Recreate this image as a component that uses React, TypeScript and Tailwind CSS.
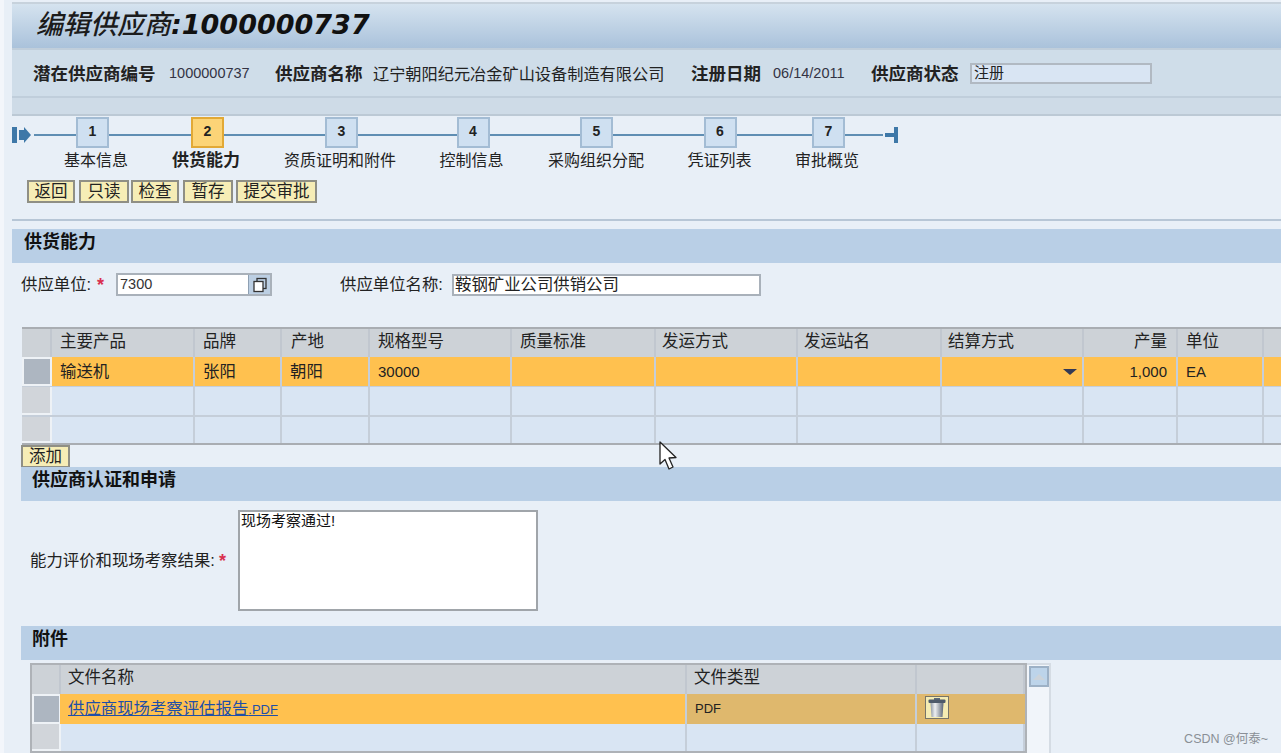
const mainCols = "grid-cols-[30px_143px_87px_88px_142px_144px_142px_144px_142px_94px_86px_100px]";
const fileCols = "grid-cols-[29px_626px_230px_108px]";

function Btn({ w, label }: { w: string; label: string }) {
  return (
    <button className={`${w} h-[23px] bg-[#f6edb6] border-2 border-[#8f8f85] pb-[2px] text-[16.5px] leading-[16px] text-[#222] text-center whitespace-nowrap`}>
      {label}
    </button>
  );
}

function Section({ title, className }: { title: string; className: string }) {
  return (
    <div className={`h-[34px] bg-[#b9cfe6] pt-[2px] text-[18px] leading-[22px] font-bold text-[#111] ${className}`}>
      {title}
    </div>
  );
}

function Star() {
  return <span className="inline-block w-[8px] text-[#d9304f] font-bold text-[18px] leading-none">*</span>;
}

function Step({ n, label, w, active, labelClass = "" }: { n: number; label: string; w: string; active?: boolean; labelClass?: string }) {
  return (
    <div className={`${w} flex flex-col items-center`}>
      <div className="w-full flex items-start">
        <div className="flex-1 h-[2px] mt-[17px] bg-[#5f8eb3]" />
        <div
          className={`w-[33px] h-[31px] border-2 flex items-center justify-center pb-[3px] text-[14px] font-bold text-[#222] ${
            active ? "bg-[#fcd477] border-[#e2a936]" : "bg-[#cfe0f1] border-[#a3bcd4]"
          }`}
        >
          {n}
        </div>
        <div className="flex-1 h-[2px] mt-[17px] bg-[#5f8eb3]" />
      </div>
      <div className={`mt-[2px] leading-[22px] whitespace-nowrap text-[#222] ${active ? "font-bold text-[17px]" : "text-[16px]"} ${labelClass}`}>
        {label}
      </div>
    </div>
  );
}

function HeadCell({ children, right, pad = "pl-[8px]" }: { children?: React.ReactNode; right?: boolean; pad?: string }) {
  return (
    <div className={`bg-[#cdd2d7] border-r-2 border-[#c1c7cf] text-[16.5px] leading-[24px] text-[#222] whitespace-nowrap ${pad} ${right ? "text-right pr-[9px]" : ""}`}>
      {children}
    </div>
  );
}

function Cell({ children, className = "", size = "text-[16.4px]" }: { children?: React.ReactNode; className?: string; size?: string }) {
  return (
    <div className={`border-r-2 border-[#c5ced9] leading-[29px] text-[#222] pl-[8px] whitespace-nowrap ${size} ${className}`}>
      {children}
    </div>
  );
}

function Selector({ active }: { active?: boolean }) {
  return (
    <div className={`border-r-2 border-b-2 border-[#eef2f6] ${active ? "bg-[#adb6c1] border-l-2 border-t-2" : "bg-[#d1d5da]"}`} />
  );
}

function MainTable() {
  const empty = Array.from({ length: 11 });
  return (
    <div className="w-[1290px] border-t-2 border-b-2 border-[#a9adb2]">
      <div className={`grid ${mainCols} h-[28px]`}>
        <HeadCell />
        <HeadCell>主要产品</HeadCell>
        <HeadCell>品牌</HeadCell>
        <HeadCell pad="pl-[9px]">产地</HeadCell>
        <HeadCell>规格型号</HeadCell>
        <HeadCell>质量标准</HeadCell>
        <HeadCell pad="pl-[6px]">发运方式</HeadCell>
        <HeadCell pad="pl-[6px]">发运站名</HeadCell>
        <HeadCell pad="pl-[6px]">结算方式</HeadCell>
        <HeadCell right>产量</HeadCell>
        <HeadCell>单位</HeadCell>
        <HeadCell />
      </div>
      <div className={`grid ${mainCols} h-[30px] border-b-2 border-[#c5ced9]`}>
        <Selector active />
        <Cell className="bg-[#ffc14f]">输送机</Cell>
        <Cell className="bg-[#ffc14f]">张阳</Cell>
        <Cell className="bg-[#ffc14f]">朝阳</Cell>
        <Cell className="bg-[#ffc14f] text-[#5a3a10]" size="text-[15px]">30000</Cell>
        <Cell className="bg-[#ffc14f]" />
        <Cell className="bg-[#ffc14f]" />
        <Cell className="bg-[#ffc14f]" />
        <div className="bg-[#ffc14f] border-r-2 border-[#c5ced9] flex items-center justify-end pr-[5px]">
          <span className="w-0 h-0 border-x-[7px] border-x-transparent border-t-[6px] border-t-[#333a55]" />
        </div>
        <Cell className="bg-[#ffc14f] text-right text-[#5a3a10] pr-[9px]" size="text-[15px]">1,000</Cell>
        <Cell className="bg-[#ffc14f]" size="text-[15px]">EA</Cell>
        <Cell className="bg-[#ffc14f]" />
      </div>
      <div className={`grid ${mainCols} h-[30px] border-b-2 border-[#c5ced9]`}>
        <Selector />
        {empty.map((_, i) => (
          <Cell key={i} className="bg-[#d9e5f3]" />
        ))}
      </div>
      <div className={`grid ${mainCols} h-[26px]`}>
        <Selector />
        {empty.map((_, i) => (
          <Cell key={i} className="bg-[#d9e5f3]" />
        ))}
      </div>
    </div>
  );
}

function Trash() {
  return (
    <svg width="24" height="23" viewBox="0 0 24 23">
      <defs>
        <linearGradient id="can" x1="0" x2="1" y1="0" y2="0">
          <stop offset="0" stopColor="#8d97a5" />
          <stop offset="0.35" stopColor="#eef0f3" />
          <stop offset="1" stopColor="#5c6776" />
        </linearGradient>
      </defs>
      <rect x="0.5" y="0.5" width="23" height="22" fill="#f5ecb3" stroke="#77756a" />
      <rect x="9" y="2" width="6" height="2" fill="#5f6b7b" />
      <rect x="3.5" y="3.5" width="17" height="3.5" rx="1" fill="#4d5a6b" />
      <path d="M5.5 7 L18.5 7 L17.5 21 L6.5 21 Z" fill="url(#can)" />
    </svg>
  );
}

function FileTable() {
  return (
    <div className="flex h-[92px]">
      <div className="w-[997px] border-t-2 border-x-2 border-[#aeb2b7]">
        <div className={`grid ${fileCols} h-[29px]`}>
          <HeadCell />
          <HeadCell pad="pl-[7px]">文件名称</HeadCell>
          <HeadCell pad="pl-[7px]">文件类型</HeadCell>
          <HeadCell />
        </div>
        <div className={`grid ${fileCols} h-[30px] border-b border-[#c1c7cf]`}>
          <Selector active />
          <Cell className="bg-[#ffc14f] -ml-[1px]">
            <a className="text-[#1f4fa8] underline">
              供应商现场考察评估报告<span className="text-[13px]">.PDF</span>
            </a>
          </Cell>
          <Cell className="bg-[#dfb86d]" size="text-[13px]">PDF</Cell>
          <div className="bg-[#dfb86d] pl-[8px] pt-[2px]">
            <Trash />
          </div>
        </div>
        <div className={`grid ${fileCols} h-[29px] border-b-2 border-[#aeb2b7]`}>
          <Selector />
          <Cell className="bg-[#d9e5f3]" />
          <Cell className="bg-[#d9e5f3]" />
          <Cell className="bg-[#d9e5f3]" />
        </div>
      </div>
      <div className="w-[24px] bg-[#f1f5fa] border-t-2 border-r-2 border-[#d5dce4] pl-[2px] pt-[1px]">
        <div className="w-[20px] h-[21px] bg-[#bdd4ea] border-2 border-[#9db1c6] flex items-center justify-center">
          <span className="w-0 h-0 border-x-[6px] border-x-transparent border-b-[6px] border-b-[#ccd3da]" />
        </div>
      </div>
    </div>
  );
}

export default function App() {
  return (
    <div className="relative w-[1281px] h-[753px] overflow-hidden bg-[#f3f6fb] pl-[4px] font-['Liberation_Sans','Noto_Sans_CJK_SC',sans-serif] text-[#222]">
      <div className="h-full bg-[#e8eff7] pl-[8px]">
        {/* header */}
        <div className="h-[4px] border-b-2 border-[#c7d2dc]" />
        <div className="h-[44px] bg-gradient-to-b from-[#d5e3ef] to-[#aac2db] pl-[24px] pb-[2px] flex items-center whitespace-nowrap italic font-medium text-[27px] text-[#1c1c1c]">
          编辑供应商<span className="font-['DejaVu_Sans'] font-bold text-[#111]">:1000000737</span>
        </div>
        <div className="h-[50px] bg-[#cfdde9] border-t-2 border-b-2 border-[#c0cedb] pl-[21px] pt-[2px] flex items-center whitespace-nowrap">
          <b className="text-[17.5px] w-[136px]">潜在供应商编号</b>
          <span className="text-[14.5px] w-[106px] text-[#334]">1000000737</span>
          <b className="text-[17.5px] w-[98px]">供应商名称</b>
          <span className="text-[16.2px] w-[318px]">辽宁朝阳纪元冶金矿山设备制造有限公司</span>
          <b className="text-[17.5px] w-[82px]">注册日期</b>
          <span className="text-[14.5px] w-[98px] text-[#334]">06/14/2011</span>
          <b className="text-[17.5px] w-[99px]">供应商状态</b>
          <div className="w-[182px] h-[21px] mb-[2px] bg-[#d9e5f3] border-2 border-[#b1b9c2] pl-[2px] text-[15px] leading-[16px]">注册</div>
        </div>
        <div className="h-[18px] bg-[#cedbe7] border-b-2 border-[#bcc9d5]" />

        {/* roadmap */}
        <div className="h-[52px] mt-[1px] flex items-start">
          <svg width="22" height="36" viewBox="0 0 22 36" className="shrink-0">
            <rect x="0" y="10" width="5" height="16" fill="#3e78a8" />
            <path d="M7 13 L12 13 L12 10 L19 18 L12 26 L12 23 L7 23 Z" fill="#3e78a8" />
          </svg>
          <Step n={1} label="基本信息" w="w-[117px]" labelClass="ml-[7px]" />
          <Step n={2} label="供货能力" w="w-[113px]" active labelClass="-ml-[3px]" />
          <Step n={3} label="资质证明和附件" w="w-[155px]" labelClass="-ml-[3px]" />
          <Step n={4} label="控制信息" w="w-[108px]" labelClass="-ml-[3px]" />
          <Step n={5} label="采购组织分配" w="w-[139px]" labelClass="-ml-[1px]" />
          <Step n={6} label="凭证列表" w="w-[108px]" labelClass="-ml-[1px]" />
          <Step n={7} label="审批概览" w="w-[109px]" labelClass="-ml-[3px]" />
          <svg width="16" height="36" viewBox="0 0 16 36" className="shrink-0">
            <rect x="2" y="16" width="10" height="4" fill="#3e78a8" />
            <rect x="11" y="10" width="4" height="16" fill="#3e78a8" />
          </svg>
        </div>
        <div className="mt-[11px] pl-[15px] flex">
          <Btn w="w-[48px] mr-[4px]" label="返回" />
          <Btn w="w-[50px] mr-[2px]" label="只读" />
          <Btn w="w-[48px] mr-[4px]" label="检查" />
          <Btn w="w-[50px] mr-[3px]" label="暂存" />
          <Btn w="w-[81px]" label="提交审批" />
        </div>
        <div className="mt-[16px] h-[2px] bg-[#b7c6d6]" />

        <Section title="供货能力" className="mt-[8px] pl-[12px]" />

        {/* supply unit */}
        <div className="mt-[10px] h-[23px] pl-[9px] flex items-center whitespace-nowrap">
          <span className="text-[16.4px] w-[76px]">供应单位:</span>
          <Star />
          <div className="ml-[11px] w-[156px] h-[23px] flex border-2 border-[#a9b1ba]">
            <input readOnly defaultValue="7300" className="w-[130px] bg-white pl-[2px] text-[14.5px] text-[#333] outline-none" />
            <div className="flex-1 bg-[#bccfe3] border-l border-[#8ea0b3] flex items-center justify-center">
              <svg width="16" height="16" viewBox="0 0 16 16" fill="none" stroke="#333" strokeWidth="1.3">
                <rect x="5" y="1.5" width="9" height="10" />
                <rect x="2" y="4.5" width="9" height="10" fill="#fff" />
              </svg>
            </div>
          </div>
          <span className="ml-[68px] text-[16.4px] w-[112px]">供应单位名称:</span>
          <input readOnly defaultValue="鞍钢矿业公司供销公司" className="w-[309px] h-[22px] bg-white border-2 border-[#a9b1ba] pl-[1px] text-[16.4px] text-[#222] outline-none" />
        </div>

        <div className="mt-[31px] pl-[10px]">
          <MainTable />
        </div>

        <div className="pl-[9px]">
          <Btn w="w-[49px] block" label="添加" />
          <Section title="供应商认证和申请" className="pl-[11px] -mt-[1px]" />

          {/* evaluation */}
          <div className="mt-[9px] flex items-center">
            <span className="ml-[9px] w-[189px] text-[16.4px] whitespace-nowrap">能力评价和现场考察结果:</span>
            <Star />
            <textarea
              readOnly
              defaultValue="现场考察通过!"
              className="ml-[11px] w-[300px] h-[101px] bg-white border-2 border-[#a0a5aa] px-[1px] text-[15px] leading-[18px] text-[#111] outline-none resize-none"
            />
          </div>

          <Section title="附件" className="mt-[15px] pl-[11px]" />
          <div className="mt-[3px] pl-[9px]">
            <FileTable />
          </div>
        </div>
      </div>

      {/* pointer captured in the screenshot */}
      <svg width="20" height="30" viewBox="0 0 20 30" className="absolute left-[659px] top-[441px]">
        <path d="M1 1 L1 23 L6 18.5 L10 28 L14 26 L10 17 L17 16.5 Z" fill="#fff" stroke="#222" strokeWidth="1.3" strokeLinejoin="round" />
      </svg>
      <div className="absolute right-[13px] top-[730px] text-[12.5px] text-[#8a8f96]">CSDN @何泰~</div>
    </div>
  );
}
